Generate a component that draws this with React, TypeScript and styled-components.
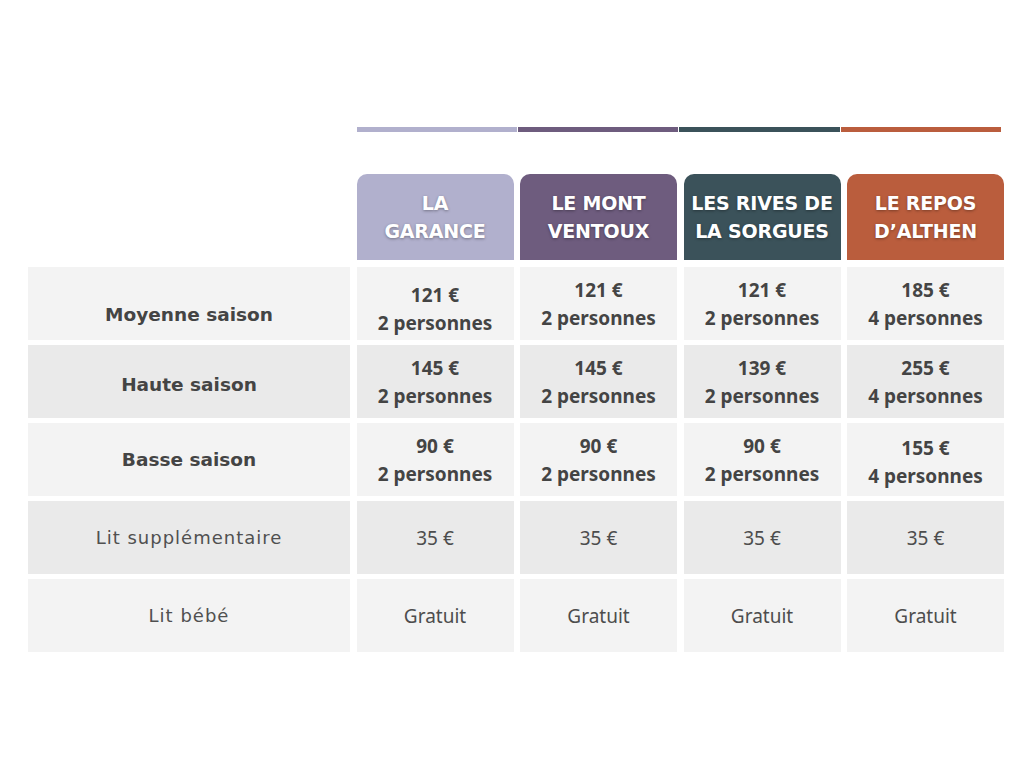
import React from 'react';
import styled, { createGlobalStyle } from 'styled-components';

const GlobalStyle = createGlobalStyle`
    html, body {
        margin: 0;
        padding: 0;
        background: #ffffff;
    }
    body {
        width: 1024px;
        height: 768px;
        overflow: hidden;
    }
`;

/** gîtes: nom + couleur */
const gites = [
    { name: ['LA', 'GARANCE'], color: '#b1b0cd' },
    { name: ['LE MONT', 'VENTOUX'], color: '#6e5c7e' },
    { name: ['LES RIVES DE', 'LA SORGUES'], color: '#3b525a' },
    { name: ['LE REPOS', 'D’ALTHEN'], color: '#ba5d3d' },
];

type Cell = { lines: string[]; shift?: number };
type Row = { label: string; strong: boolean; shift?: number; tone: 'light' | 'dark'; cells: Cell[] };

const rows: Row[] = [
    {
        label: 'Moyenne saison',
        strong: true,
        shift: 11,
        tone: 'light',
        cells: [
            { lines: ['121 €', '2 personnes'], shift: 5 },
            { lines: ['121 €', '2 personnes'] },
            { lines: ['121 €', '2 personnes'] },
            { lines: ['185 €', '4 personnes'] },
        ],
    },
    {
        label: 'Haute saison',
        strong: true,
        shift: 3,
        tone: 'dark',
        cells: [
            { lines: ['145 €', '2 personnes'] },
            { lines: ['145 €', '2 personnes'] },
            { lines: ['139 €', '2 personnes'] },
            { lines: ['255 €', '4 personnes'] },
        ],
    },
    {
        label: 'Basse saison',
        strong: true,
        tone: 'light',
        cells: [
            { lines: ['90 €', '2 personnes'] },
            { lines: ['90 €', '2 personnes'] },
            { lines: ['90 €', '2 personnes'] },
            { lines: ['155 €', '4 personnes'], shift: 2 },
        ],
    },
    {
        label: 'Lit supplémentaire',
        strong: false,
        tone: 'dark',
        cells: [{ lines: ['35 €'] }, { lines: ['35 €'] }, { lines: ['35 €'] }, { lines: ['35 €'] }],
    },
    {
        label: 'Lit bébé',
        strong: false,
        tone: 'light',
        cells: [{ lines: ['Gratuit'] }, { lines: ['Gratuit'] }, { lines: ['Gratuit'] }, { lines: ['Gratuit'] }],
    },
];

export default function App() {
    return (
        <>
            <GlobalStyle />
            <Page>
                <Table>
                    <Corner />
                    <Bars>
                        {gites.map((g) => (
                            <Bar key={g.color} $color={g.color} />
                        ))}
                    </Bars>

                    <Corner />
                    {gites.map((g) => (
                        <HeadCard key={g.color} $color={g.color}>
                            {g.name.map((line) => (
                                <span key={line}>{line}</span>
                            ))}
                        </HeadCard>
                    ))}

                    {rows.map((row) => (
                        <React.Fragment key={row.label}>
                            <Label $tone={row.tone} $strong={row.strong} $shift={row.shift ?? 0}>
                                {row.label}
                            </Label>
                            {row.cells.map((cell, i) => (
                                <Value key={i} $tone={row.tone} $strong={row.strong} $shift={cell.shift ?? 0}>
                                    {cell.lines.map((line) => (
                                        <span key={line}>{line}</span>
                                    ))}
                                </Value>
                            ))}
                        </React.Fragment>
                    ))}
                </Table>
            </Page>
        </>
    );
}

const Page = styled.div`
    width: 1024px;
    height: 768px;
    padding: 127px 0 0 28px;
    box-sizing: border-box;
`;

const Table = styled.div`
    display: grid;
    grid-template-columns: 322px repeat(4, 157px);
    column-gap: 6.5px;
    row-gap: 5px;
`;

const Corner = styled.div``;

const Bars = styled.div`
    grid-column: 2 / 6;
    display: flex;
    gap: 1px;
    height: 5px;
    margin: 0 3px 37px 0;
`;

const Bar = styled.div<{ $color: string }>`
    flex: 1;
    background: ${(p) => p.$color};
`;

const HeadCard = styled.div<{ $color: string }>`
    height: 86px;
    margin-bottom: 2px;
    border-radius: 10px 10px 0 0;
    background: ${(p) => p.$color};
    display: flex;
    flex-direction: column;
    align-items: center;
    justify-content: center;
    color: #ffffff;
    font-family: 'DejaVu Sans', sans-serif;
    font-weight: 700;
    font-size: 19px;
    line-height: 28px;
    letter-spacing: -0.2px;
    white-space: nowrap;
    text-shadow: 0 1px 3px rgba(0, 0, 0, 0.35);
`;

const Cell = styled.div<{ $tone: 'light' | 'dark'; $strong: boolean; $shift: number }>`
    height: 73px;
    box-sizing: border-box;
    padding-top: ${(p) => p.$shift * 2}px;
    background: ${(p) => (p.$tone === 'light' ? '#f3f3f3' : '#eaeaea')};
    display: flex;
    flex-direction: column;
    align-items: center;
    justify-content: center;
    text-align: center;
    color: #444444;
    font-size: 19px;
    line-height: 28px;
    font-weight: ${(p) => (p.$strong ? 700 : 400)};
`;

const Label = styled(Cell)`
    font-family: 'DejaVu Sans', sans-serif;
    font-size: ${(p) => (p.$strong ? '18.5px' : '18px')};
    letter-spacing: ${(p) => (p.$strong ? '0' : '1px')};
    color: ${(p) => (p.$strong ? '#444444' : '#505050')};
`;

const Value = styled(Cell)`
    font-family: 'Noto Sans', sans-serif;
    color: ${(p) => (p.$strong ? '#444444' : '#4d4d4d')};
`;
